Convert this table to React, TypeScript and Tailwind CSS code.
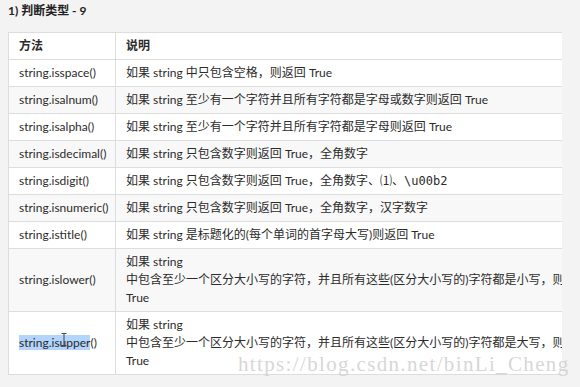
const rows: { name: string; desc: React.ReactNode; multi?: boolean }[] = [
  { name: "string.isspace()", desc: "如果 string 中只包含空格，则返回 True" },
  { name: "string.isalnum()", desc: "如果 string 至少有一个字符并且所有字符都是字母或数字则返回 True" },
  { name: "string.isalpha()", desc: "如果 string 至少有一个字符并且所有字符都是字母则返回 True" },
  { name: "string.isdecimal()", desc: "如果 string 只包含数字则返回 True，全角数字" },
  {
    name: "string.isdigit()",
    desc: (
      <>
        如果 string 只包含数字则返回 True，全角数字、⑴、
        <code className="font-['DejaVu_Sans_Mono',monospace] text-[12px]">\u00b2</code>
      </>
    ),
  },
  { name: "string.isnumeric()", desc: "如果 string 只包含数字则返回 True，全角数字，汉字数字" },
  { name: "string.istitle()", desc: "如果 string 是标题化的(每个单词的首字母大写)则返回 True" },
  {
    name: "string.islower()",
    multi: true,
    desc: "中包含至少一个区分大小写的字符，并且所有这些(区分大小写的)字符都是小写，则返回 True",
  },
  {
    name: "string.isupper()",
    multi: true,
    desc: "中包含至少一个区分大小写的字符，并且所有这些(区分大小写的)字符都是大写，则返回 True",
  },
];

export default function App() {
  return (
    <div className="relative h-[387px] w-[580px] overflow-hidden bg-[#f3f3f3] font-['Lato','Noto_Sans_CJK_SC',sans-serif] text-[#2b2b2b]">
      <h3 className="h-[32px] pl-2 pt-[2px] text-[12px] font-bold leading-[18px] text-[#222]">1) 判断类型 - 9</h3>

      <div className="ml-2 w-[554px] overflow-hidden">
        <table className="w-[820px] table-fixed border-collapse text-[12px] leading-[18px]">
          <colgroup>
            <col className="w-[107px]" />
            <col />
          </colgroup>
          <thead>
            <tr className="bg-white">
              <th className="border border-[#ddd] px-[10px] py-1 text-left font-bold">方法</th>
              <th className="border border-[#ddd] px-[10px] py-1 text-left font-bold">说明</th>
            </tr>
          </thead>
          <tbody>
            {rows.map((r, i) => (
              <tr key={r.name} className={i % 2 === 1 ? "bg-[#f8f8f8]" : "bg-white"}>
                <td className="border border-[#ddd] px-[10px] py-1 whitespace-nowrap">
                  {r.name === "string.isupper()" ? (
                    <span className="relative">
                      <span className="bg-[#b3d4fc]">string.isupper</span>()
                      <svg className="absolute left-[42px] top-[-2px]" width="6" height="13" viewBox="0 0 6 13">
                        <path d="M0.5 0.5h5M3 0.5v12M0.5 12.5h5" stroke="#444" strokeWidth="1" fill="none" />
                      </svg>
                    </span>
                  ) : (
                    r.name
                  )}
                </td>
                <td className="border border-[#ddd] px-[10px] py-1 whitespace-nowrap">
                  {r.multi ? (
                    <>
                      如果 string
                      <br />
                      {r.desc}
                      <br />
                      True
                    </>
                  ) : (
                    r.desc
                  )}
                </td>
              </tr>
            ))}
          </tbody>
        </table>
      </div>

      <div className="pointer-events-none absolute left-[238px] top-[352px] font-['Liberation_Serif',serif] text-[21px] leading-[24px] tracking-[1.35px] text-[#cccccc]/80">
        https://blog.csdn.net/binLi_Cheng
      </div>
    </div>
  );
}
